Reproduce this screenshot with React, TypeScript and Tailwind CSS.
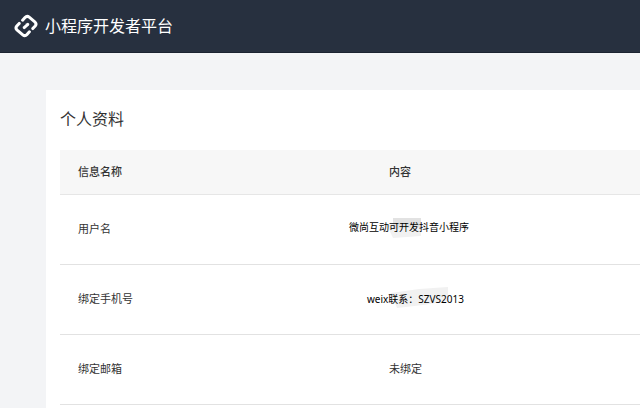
import type { ReactNode } from 'react'

type ProfileRow = {
  label: string
  value: ReactNode
  cellClass: string
}

function Logo() {
  return (
    <svg
      viewBox="0 0 24 24"
      className="size-6 shrink-0"
      fill="none"
      stroke="#fff"
      strokeWidth="3"
      strokeLinecap="round"
      strokeLinejoin="round"
      aria-hidden="true"
    >
      <path d="M8.6 6.2 L11 3.6 Q13 1.4 15.2 3.2 L20.8 7.8 Q23 9.8 21.2 12 L18.8 14.6" />
      <path d="M15.4 17.8 L13 20.4 Q11 22.6 8.8 20.8 L3.2 16.2 Q1 14.2 2.8 12 L5.2 9.4" />
      <path d="M10.2 13.6 L13.8 10.4" />
    </svg>
  )
}

const ROWS: ProfileRow[] = [
  {
    label: '用户名',
    cellClass: 'pb-1 pl-[18px] text-[10px] text-black',
    value: (
      <span className="relative inline-block">
        <svg className="absolute -top-1 left-8 h-7 w-12" viewBox="0 0 48 28" aria-hidden="true">
          <path d="M6 10 L40 6 L40 21 L12 23 Z" fill="#f1f1f1" />
          <path d="M12 3 L40 3 L40 12 L12 14 Z" fill="#e2e2e2" />
        </svg>
        <span className="relative">微尚互动可开发抖音小程序</span>
      </span>
    ),
  },
  {
    label: '绑定手机号',
    cellClass: 'pl-9 text-[10px] text-black',
    value: (
      <span className="relative inline-block">
        <svg className="absolute -top-1 left-6 h-7 w-16" viewBox="0 0 64 28" aria-hidden="true">
          <path d="M0 6 L28 2 L57 0 L57 14 L32 18 L6 21 Z" fill="#f1f1f1" />
        </svg>
        <span className="relative">weix联系：SZVS2013</span>
      </span>
    ),
  },
  { label: '绑定邮箱', cellClass: 'pl-[58px] text-[11px]', value: '未绑定' },
]

export default function App() {
  return (
    <div className="flex min-h-screen flex-col overflow-hidden bg-[#f3f4f6] font-['Noto_Sans','Noto_Sans_CJK_SC',sans-serif] text-[#333]">
      <header className="flex h-[53px] items-center gap-[7px] border-b border-[#1b2431] bg-[#27303f] px-[14px]">
        <Logo />
        <span className="text-[16px] leading-6 text-white">小程序开发者平台</span>
      </header>

      <main className="ml-[46px] mt-[37px] flex-1 bg-white pl-[14px] pt-[17px]">
        <h1 className="text-[16px] leading-6">个人资料</h1>

        <table className="mt-[19px] w-full table-fixed border-collapse text-left text-[11px] leading-4">
          <thead>
            <tr className="h-11 border-b border-[#e6e6e6] bg-[#f7f7f7]">
              <th scope="col" className="w-[271px] pl-[18px] font-medium">信息名称</th>
              <th scope="col" className="pl-[58px] font-medium">内容</th>
            </tr>
          </thead>
          <tbody>
            {ROWS.map((row) => (
              <tr key={row.label} className="h-[70px] border-b border-[#e2e2e2]">
                <th scope="row" className="pl-[18px] font-normal">{row.label}</th>
                <td className={row.cellClass}>{row.value}</td>
              </tr>
            ))}
          </tbody>
        </table>
      </main>
    </div>
  )
}
